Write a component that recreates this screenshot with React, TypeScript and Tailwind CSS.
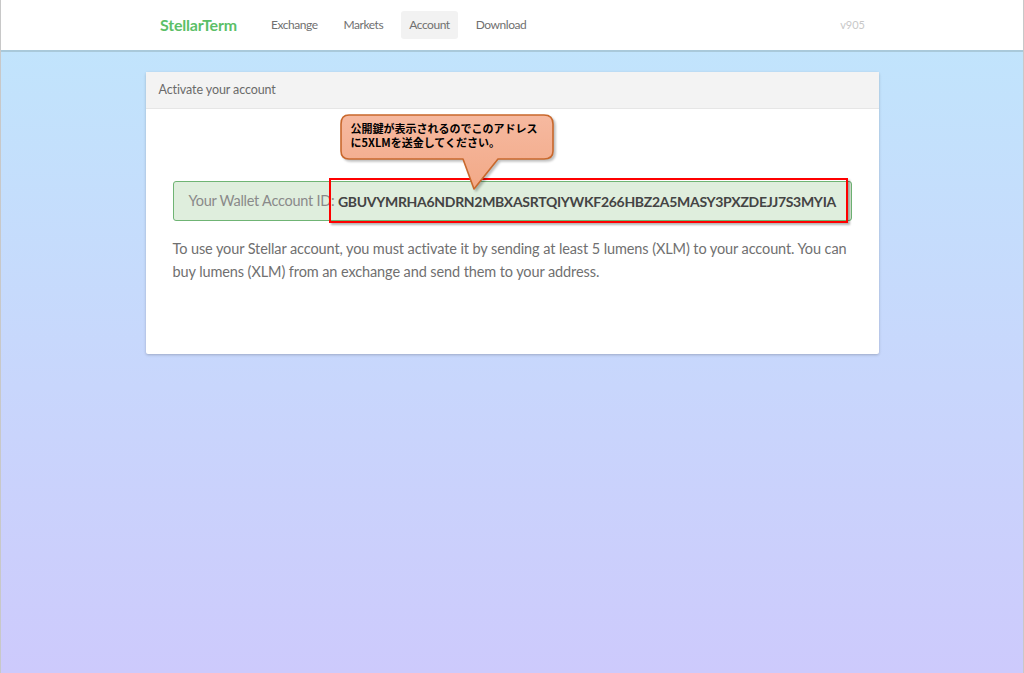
import React from "react";

const navItems = ["Exchange", "Markets", "Account", "Download"];

const accountId = "GBUVYMRHA6NDRN2MBXASRTQIYWKF266HBZ2A5MASY3PXZDEJJ7S3MYIA";

const Callout = () => {
  return (
    <div className="absolute left-[194px] top-[5px] h-[80px] w-[216px]">
      <svg width="216" height="80" viewBox="0 0 216 80" className="absolute left-0 top-0 drop-shadow-[2px_2px_1px_rgba(0,0,0,0.25)]">
        <defs>
          <linearGradient id="callout-fill" x1="0" y1="0" x2="0" y2="1">
            <stop offset="0" stopColor="#f6b9a0" />
            <stop offset="1" stopColor="#f2a987" />
          </linearGradient>
        </defs>
        <path
          d="M9 1 H204 Q213 1 213 10 V37 Q213 45 204 45 H158 L134 75 L123 45 H9 Q1 45 1 37 V10 Q1 1 9 1 Z"
          fill="url(#callout-fill)"
          stroke="#c9682c"
          strokeWidth="1.6"
          strokeLinejoin="round"
        />
      </svg>
      <p className="relative pl-[11px] pt-[7px] text-[11px] font-bold leading-[14px] text-black [font-family:'Noto_Sans_CJK_JP',sans-serif]">
        公開鍵が表示されるのでこのアドレス
        <br />
        に5XLMを送金してください。
      </p>
    </div>
  );
};

export default function App() {
  return (
    <div className="flex min-h-[673px] w-full flex-col border-x border-[#c8c8c8] bg-gradient-to-b from-[#c0e6fc] to-[#cdcafc] [font-family:Lato,'Liberation_Sans',sans-serif]">
      <header className="flex h-[52px] items-center border-b-2 border-[#a9c9da] bg-white pl-[159px] pr-[158px]">
        <span className="mr-[26px] text-[16px] font-bold tracking-[-0.2px] text-[#5cbf68]">StellarTerm</span>
        <nav className="flex items-center gap-[10px]">
          {navItems.map((item) => (
            <span
              key={item}
              className={
                item === "Account"
                  ? "rounded-[3px] bg-[#f2f2f2] px-[8px] py-[5px] text-[12px] tracking-[-0.45px] text-[#707070]"
                  : "px-[8px] py-[5px] text-[12px] tracking-[-0.45px] text-[#707070]"
              }
            >
              {item}
            </span>
          ))}
        </nav>
        <span className="ml-auto text-[11px] text-[#c8c8c8]">v905</span>
      </header>

      <main className="mx-auto mt-[20px] w-[733px]">
        <div className="rounded-[2px] bg-white shadow-[0_1px_3px_rgba(0,0,0,0.22)]">
          <div className="flex h-[37px] items-center border-b border-[#e6e6e6] bg-[#f3f3f3] px-[13px] text-[12.5px] tracking-[-0.1px] text-[#6a6a6a]">
            Activate your account
          </div>
          <div className="relative px-[27px] pb-[71px] pt-[72px]">
            <div className="flex h-[40px] items-center whitespace-nowrap rounded-[3px] border border-[#6fb474] bg-[#dfeedd] px-[15px] text-[14.5px] tracking-[-0.25px]">
              <span className="text-[#8a8a8a]">Your Wallet Account ID:&nbsp;</span>
              <span className="text-[14px] font-bold tracking-[-0.3px] text-[#444]">{accountId}</span>
            </div>
            <p className="mt-[16px] text-[14.5px] leading-[23px] tracking-[-0.1px] text-[#707070]">
              To use your Stellar account, you must activate it by sending at least 5 lumens (XLM) to your account. You can buy lumens (XLM) from an exchange and send them to your address.
            </p>

            <div className="absolute left-[183px] top-[69px] h-[45px] w-[519px] border-2 border-[#ff0000] shadow-[2px_2px_2px_rgba(0,0,0,0.3)]" />
            <Callout />
          </div>
        </div>
      </main>
    </div>
  );
}
